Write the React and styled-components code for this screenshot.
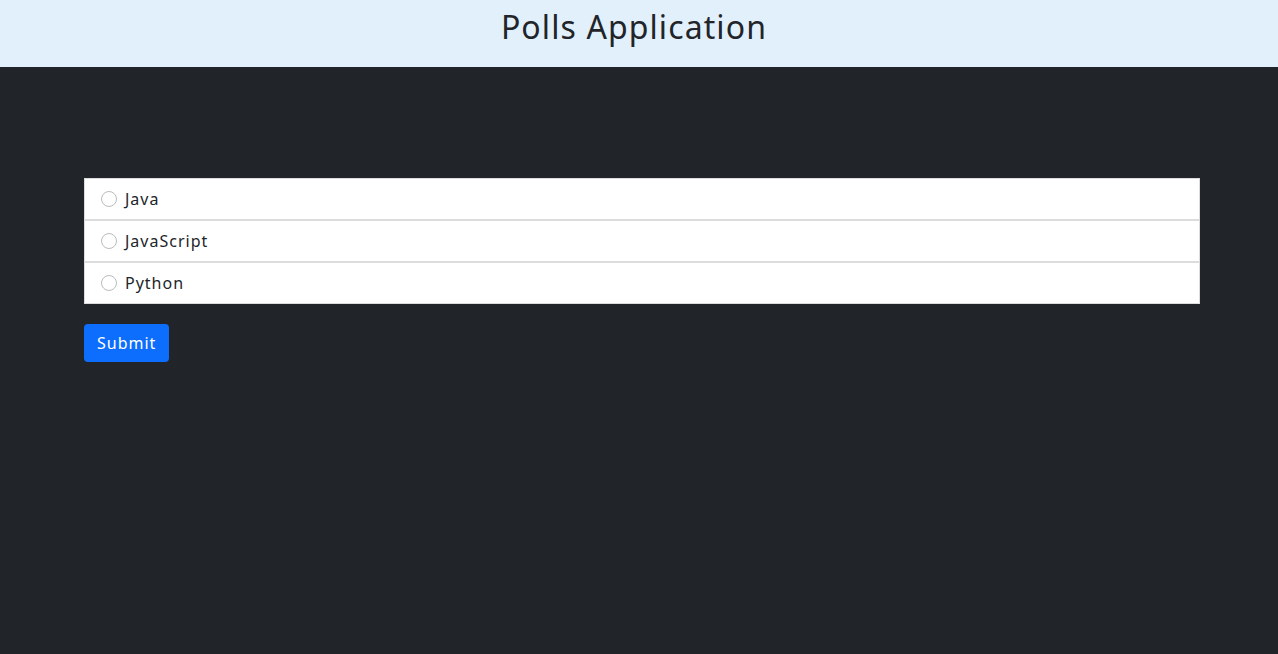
import React, { useState } from "react";
import styled, { createGlobalStyle } from "styled-components";

const GlobalStyle = createGlobalStyle`
  html, body {
    margin: 0;
    padding: 0;
    background-color: #212529;
    font-family: "Noto Sans", "Open Sans", sans-serif;
  }
`;

const Page = styled.div`
  min-height: 654px;
  background-color: #212529;
`;

const Header = styled.header`
  height: 67px;
  box-sizing: border-box;
  padding: 5px 10px 0 0;
  background-color: #e1f0fb;
  display: flex;
  justify-content: center;
`;

const Title = styled.h1`
  margin: 0;
  font-size: 32px;
  line-height: 44px;
  font-weight: 400;
  color: #212529;
  letter-spacing: 1.1px;
`;

const Container = styled.main`
  width: 1116px;
  padding: 111px 0 0 84px;
`;

const OptionList = styled.ul`
  list-style: none;
  margin: 0;
  padding: 0;
`;

const OptionItem = styled.li`
  height: 40px;
  display: flex;
  align-items: center;
  padding: 0 16px;
  background-color: #fff;
  border: 1px solid #dcdcdc;
  color: #212529;
  font-size: 16px;
  letter-spacing: 1px;
  line-height: 38px;
  cursor: pointer;
`;

const Radio = styled.span`
  width: 14px;
  height: 14px;
  border-radius: 50%;
  border: 1px solid ${(p) => (p.checked ? "#0d6efd" : "#bcbcbc")};
  background-color: #fff;
  margin-right: 8px;
  box-sizing: content-box;
  display: flex;
  align-items: center;
  justify-content: center;

  &::after {
    content: "";
    width: 8px;
    height: 8px;
    border-radius: 50%;
    background-color: ${(p) => (p.checked ? "#0d6efd" : "transparent")};
  }
`;

const SubmitButton = styled.button`
  margin-top: 20px;
  height: 38px;
  padding: 0 13px;
  background-color: #0d6efd;
  color: #fff;
  border: none;
  border-radius: 4px;
  font-family: inherit;
  font-size: 16px;
  letter-spacing: 1px;
  cursor: pointer;
`;

const options = ["Java", "JavaScript", "Python"];

const App = () => {
  const [selected, setSelected] = useState(null);

  return (
    <>
      <GlobalStyle />
      <Page>
        <Header>
          <Title>Polls Application</Title>
        </Header>
        <Container>
          <OptionList>
            {options.map((opt) => (
              <OptionItem key={opt} onClick={() => setSelected(opt)}>
                <Radio checked={selected === opt} />
                {opt}
              </OptionItem>
            ))}
          </OptionList>
          <SubmitButton>Submit</SubmitButton>
        </Container>
      </Page>
    </>
  );
};

export default App;
